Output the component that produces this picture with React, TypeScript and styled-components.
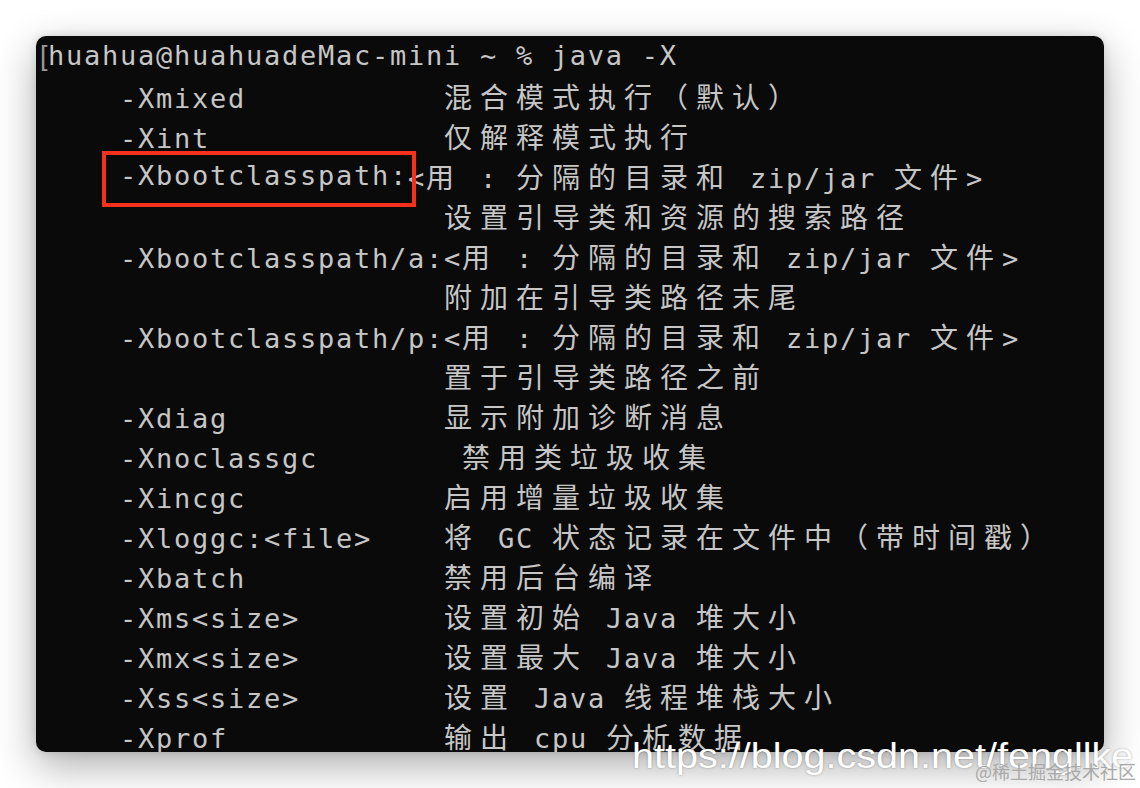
import styled, { createGlobalStyle } from 'styled-components';

const GlobalStyle = createGlobalStyle`
  html, body {
    margin: 0;
    background: #ffffff;
  }
  body {
    width: 1140px;
    height: 788px;
    overflow: hidden;
  }
`;

type Line = { opt?: string; desc?: string; raw?: boolean; mark?: boolean };

const lines: Line[] = [
  { opt: '-Xmixed', desc: '混合模式执行（默认）' },
  { opt: '-Xint', desc: '仅解释模式执行' },
  { opt: '-Xbootclasspath:', desc: '<用 : 分隔的目录和 zip/jar 文件>', raw: true, mark: true },
  { opt: '', desc: '设置引导类和资源的搜索路径' },
  { opt: '-Xbootclasspath/a:', desc: '<用 : 分隔的目录和 zip/jar 文件>' },
  { opt: '', desc: '附加在引导类路径末尾' },
  { opt: '-Xbootclasspath/p:', desc: '<用 : 分隔的目录和 zip/jar 文件>' },
  { opt: '', desc: '置于引导类路径之前' },
  { opt: '-Xdiag', desc: '显示附加诊断消息' },
  { opt: '-Xnoclassgc', desc: ' 禁用类垃圾收集' },
  { opt: '-Xincgc', desc: '启用增量垃圾收集' },
  { opt: '-Xloggc:<file>', desc: '将 GC 状态记录在文件中（带时间戳）' },
  { opt: '-Xbatch', desc: '禁用后台编译' },
  { opt: '-Xms<size>', desc: '设置初始 Java 堆大小' },
  { opt: '-Xmx<size>', desc: '设置最大 Java 堆大小' },
  { opt: '-Xss<size>', desc: '设置 Java 线程堆栈大小' },
  { opt: '-Xprof', desc: '输出 cpu 分析数据' },
];

const CJK = /[\u3000-\u303f\u4e00-\u9fff\uff00-\uffef]/;

// split a line into mono runs and wide CJK runs so every glyph keeps the terminal grid
const Text = ({ value }: { value: string }) => {
  const runs = value.match(/[\u3000-\u303f\u4e00-\u9fff\uff00-\uffef]+|[^\u3000-\u303f\u4e00-\u9fff\uff00-\uffef]+/g) || [];
  return (
    <>
      {runs.map((run, i) =>
        CJK.test(run) ? <Wide key={i}>{run}</Wide> : <Mono key={i}>{run}</Mono>
      )}
    </>
  );
};

export default function App() {
  return (
    <Page>
      <GlobalStyle />
      <Terminal>
        <Row>
          <Bracket>[</Bracket>
          <Mono>huahua@huahuadeMac-mini ~ % java -X</Mono>
        </Row>
        {lines.map((line, i) => (
          <Row key={i}>
            <Mono>{'    '}</Mono>
            {line.mark ? (
              <Marked>
                <Mono>{line.opt}</Mono>
              </Marked>
            ) : (
              <Mono>{line.raw ? line.opt : (line.opt || '').padEnd(18, ' ')}</Mono>
            )}
            <Text value={line.desc || ''} />
          </Row>
        ))}
      </Terminal>
      <Watermark>https://blog.csdn.net/fengllke</Watermark>
      <Credit>@稀土掘金技术社区</Credit>
    </Page>
  );
}

const Page = styled.div`
  position: relative;
  width: 1140px;
  height: 788px;
  background: #ffffff;
  padding: 36px 0 0 36px;
  box-sizing: border-box;
  overflow: hidden;
`;

const Terminal = styled.div`
  width: 1068px;
  height: 716px;
  box-sizing: border-box;
  padding-left: 12px;
  background: #0a0a0a;
  border-radius: 10px;
  overflow: hidden;
  color: #c6c6c6;
  box-shadow:
    0 14px 42px rgba(0, 0, 0, 0.32),
    0 0 10px rgba(0, 0, 0, 0.12);
`;

const Row = styled.div`
  height: 40px;
  line-height: 40px;
  white-space: pre;
`;

const Mono = styled.span`
  font-family: "DejaVu Sans Mono", "Liberation Mono", monospace;
  font-size: 27px;
  letter-spacing: 1.74px;
`;

const Wide = styled.span`
  font-family: "Noto Sans CJK SC", sans-serif;
  font-size: 28px;
  letter-spacing: 8px;
`;

const Bracket = styled.span`
  display: inline-block;
  width: 8px;
  margin-left: -8px;
  font-family: "Liberation Sans", sans-serif;
  font-size: 27px;
  color: #9a9a9a;
`;

const Marked = styled.span`
  position: relative;
  display: inline-block;
  height: 40px;
  vertical-align: top;

  &::after {
    content: "";
    position: absolute;
    top: -5px;
    bottom: -11px;
    left: -18px;
    right: -8px;
    border: 4px solid #f5301c;
  }
`;

const Watermark = styled.div`
  position: absolute;
  left: 632px;
  top: 738px;
  font-family: "Liberation Sans", Arial, sans-serif;
  font-size: 35px;
  line-height: 1;
  color: #ffffff;
  white-space: nowrap;
  transform: scaleX(1.13);
  transform-origin: left center;
  text-shadow: 0 0 2px rgba(0, 0, 0, 0.35);
`;

const Credit = styled.div`
  position: absolute;
  left: 975px;
  top: 762px;
  font-family: "Noto Sans CJK SC", sans-serif;
  font-size: 18px;
  line-height: 1;
  color: #a9a9a9;
  white-space: nowrap;
`;
